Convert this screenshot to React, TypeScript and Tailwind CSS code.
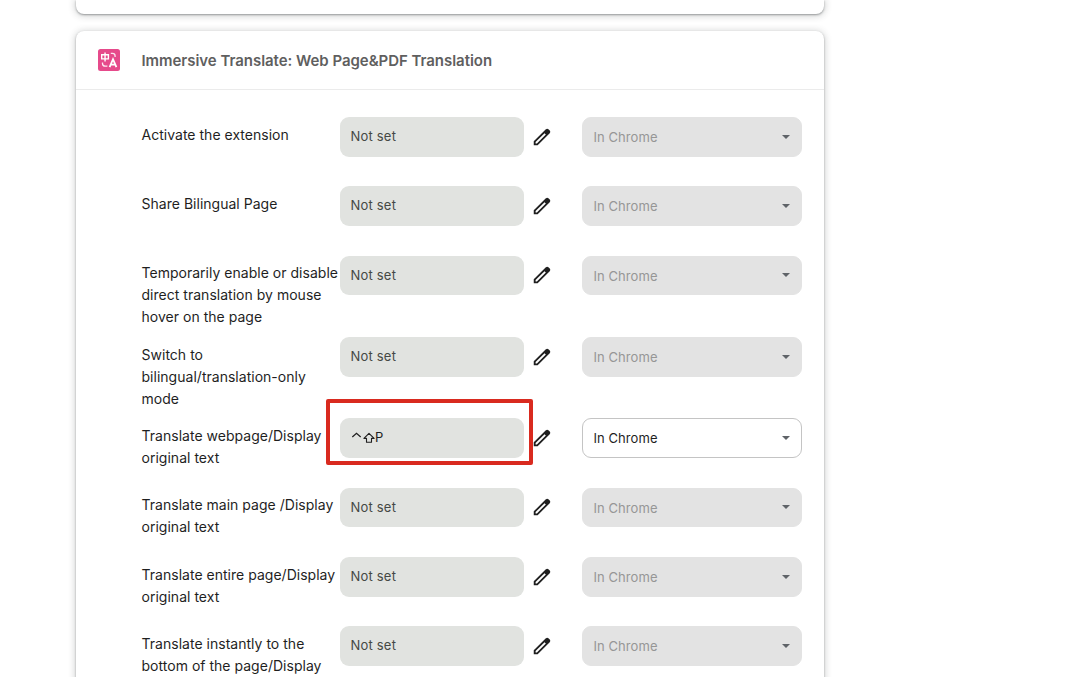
import React from "react";

type Row = { lines: string[]; height: string; shortcut?: boolean };

const rows: Row[] = [
  { lines: ["Activate the extension"], height: "h-[69px]" },
  { lines: ["Share Bilingual Page"], height: "h-[69.5px]" },
  {
    lines: ["Temporarily enable or disable", "direct translation by mouse", "hover on the page"],
    height: "h-[81.5px]",
  },
  { lines: ["Switch to", "bilingual/translation-only", "mode"], height: "h-[81px]" },
  { lines: ["Translate webpage/Display", "original text"], height: "h-[69.5px]", shortcut: true },
  { lines: ["Translate main page /Display", "original text"], height: "h-[69.5px]" },
  { lines: ["Translate entire page/Display", "original text"], height: "h-[69px]" },
  { lines: ["Translate instantly to the", "bottom of the page/Display"], height: "h-[82px]" },
];

function TranslateLogo() {
  return (
    <svg className="h-[22px] w-[22px]" viewBox="0 0 22 22" fill="none" stroke="white">
      <rect width="22" height="22" rx="2.5" fill="#e64a8b" stroke="none" />
      <path d="M3.7 5.7h6.7v4.2H3.7zM7.05 3.4v9" strokeWidth="1.4" />
      <path d="M12.8 4.4h1.7c1.7 0 2.6.9 2.6 2.6v1" strokeWidth="1.3" strokeOpacity="0.85" />
      <path d="M4.5 13.6v.8c0 1.8 1 2.8 2.8 2.8H9.4" strokeWidth="1.3" strokeOpacity="0.9" />
      <path d="M11.6 18.2 15 10.2l3.4 8M12.9 15.7h4.2" strokeWidth="1.8" />
    </svg>
  );
}

function EditIcon() {
  return (
    <svg className="h-[22px] w-[22px]" viewBox="0 -960 960 960" fill="#1f1f1f">
      <path d="M200-200h57l391-391-57-57-391 391v57Zm-80 80v-170l528-527q12-11 26.5-17t30.5-6q16 0 31 6t26 18l55 56q12 11 17.5 26t5.5 30q0 16-5.5 30.5T817-647L290-120H120Z" />
    </svg>
  );
}

function ShortcutRow({ row }: { row: Row }) {
  return (
    <div className={`flex shrink-0 items-start ${row.height}`}>
      <div className="w-[198.5px] shrink-0 pt-[6.9px] text-[14px] leading-[22px] tracking-[0.02px] text-[#1f1f1f]">
        {row.lines.map((line) => (
          <div key={line} className="whitespace-nowrap">{line}</div>
        ))}
      </div>
      <div className="relative flex h-[39.67px] w-[184px] shrink-0 items-center rounded-[9px] bg-[#e1e3e0] pl-[10.5px] text-[13px] tracking-[0.2px] text-[#454845]">
        {row.shortcut ? (
          <span className="flex items-center text-[#1f1f1f]">
            <svg className="mr-px h-[14px] w-[11px]" viewBox="0 0 11 14" fill="none" stroke="currentColor" strokeWidth="1.2">
              <path d="m1.3 6 4.2-3.8L9.7 6" />
            </svg>
            <svg className="h-[14px] w-[12.5px]" viewBox="0 0 12.5 14" fill="none" stroke="currentColor" strokeWidth="1.1" strokeLinejoin="round">
              <path d="M6 2.3.9 7.4h2.6v3.9h5V7.4h2.6Z" />
            </svg>
            P
          </span>
        ) : (
          "Not set"
        )}
        {row.shortcut && (
          <div className="absolute -top-[19px] -left-[14px] z-10 h-[66px] w-[207.4px] rounded-[2px] border-4 border-[#d92a1f]" />
        )}
      </div>
      <div className="ml-[7px] flex h-[39.67px] w-[22px] shrink-0 items-center">
        <EditIcon />
      </div>
      <div
        className={`ml-[29px] flex h-[39.67px] w-[220px] shrink-0 items-center justify-between rounded-[9px] border pr-[11px] pl-[10.5px] text-[13px] tracking-[0.07px] ${
          row.shortcut ? "border-[#c4c4c4] bg-white text-[#1f1f1f]" : "border-[#e3e3e3] bg-[#e3e3e3] text-[#969696]"
        }`}
      >
        <span className="pt-[1.9px]">In Chrome</span>
        <svg className="h-1 w-2" viewBox="0 0 8 4" fill="#5f6368">
          <path d="M0 0h8L4 4Z" />
        </svg>
      </div>
    </div>
  );
}

export default function App() {
  return (
    <main className="flex h-[677px] w-[1078px] flex-col overflow-hidden bg-white pl-[76px] font-['Inter','Liberation_Sans',sans-serif]">
      <div className="h-[14px] w-[748px] shrink-0 rounded-b-[8px] bg-white shadow-[0_1px_2px_rgba(60,64,67,0.45),0_1px_6px_2px_rgba(60,64,67,0.18)]" />
      <section className="mt-[17px] flex h-[700px] w-[748px] shrink-0 flex-col rounded-t-[8px] bg-white shadow-[0_1px_2px_rgba(60,64,67,0.45),0_1px_6px_2px_rgba(60,64,67,0.18)]">
        <header className="flex h-[59px] shrink-0 items-center border-b border-[#ebebeb] pl-[22px]">
          <TranslateLogo />
          <h1 className="ml-[21.5px] whitespace-nowrap pt-[2px] text-[15px] font-semibold tracking-[-0.04px] text-[#5f5f5f]">
            Immersive Translate: Web Page&amp;PDF Translation
          </h1>
        </header>
        <div className="flex flex-col pt-[27px] pl-[65.5px]">
          {rows.map((row) => (
            <ShortcutRow key={row.lines.join(" ")} row={row} />
          ))}
        </div>
      </section>
    </main>
  );
}
